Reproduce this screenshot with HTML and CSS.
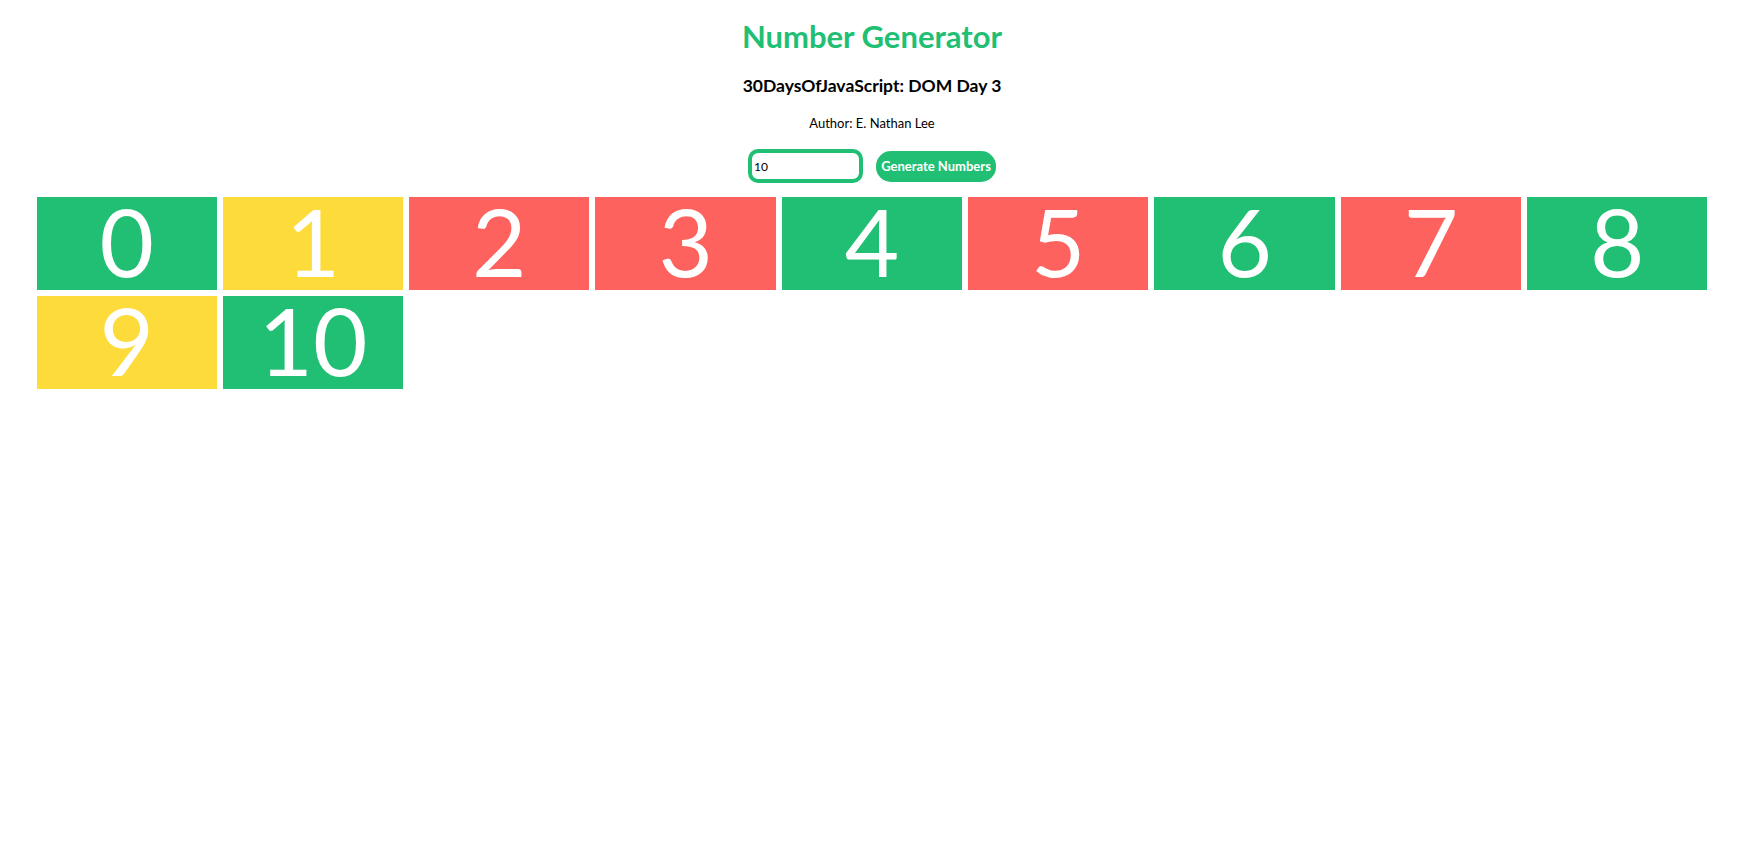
FILE: index.html
```html
<!DOCTYPE html>
<html>
<head>
<meta charset="utf-8">
<title>Number Generator</title>
<link rel="stylesheet" href="styles.css">
</head>
<body>
<header class="header">
  <h1 class="title">Number Generator</h1>
  <h2 class="subtitle">30DaysOfJavaScript: DOM Day 3</h2>
  <p class="author">Author: E. Nathan Lee</p>
</header>
<div class="controls">
  <input class="num-input" type="text" value="10">
  <button class="gen-btn">Generate Numbers</button>
</div>
<div class="grid">
  <div class="box green">0</div>
  <div class="box yellow">1</div>
  <div class="box red">2</div>
  <div class="box red">3</div>
  <div class="box green">4</div>
  <div class="box red">5</div>
  <div class="box green">6</div>
  <div class="box red">7</div>
  <div class="box green">8</div>
  <div class="box yellow">9</div>
  <div class="box green">10</div>
</div>
</body>
</html>
```
FILE: styles.css
```css
* { box-sizing: border-box; }
body {
  margin: 0;
  background: #fff;
  font-family: "Lato", "Open Sans", sans-serif;
  color: #000;
}
.header { text-align: center; }
.title {
  margin: 0;
  padding-top: 18px;
  font-size: 31px;
  line-height: 36px;
  font-weight: 700;
  color: #21bf73;
}
.subtitle {
  margin: 20px 0 0;
  font-size: 17.5px;
  line-height: 24px;
  font-weight: 700;
}
.author {
  margin: 16px 0 0;
  font-size: 13px;
  line-height: 18px;
}
.controls {
  display: flex;
  justify-content: center;
  align-items: center;
  gap: 13px;
  margin-top: 17px;
}
.num-input {
  width: 115px;
  height: 34px;
  border: 4px solid #21bf73;
  border-radius: 10px;
  padding: 0 2px;
  font-family: "Lato", sans-serif;
  font-size: 12px;
  outline: none;
}
.gen-btn {
  width: 120px;
  height: 31px;
  border: none;
  border-radius: 15px;
  background: #21bf73;
  color: #fff;
  font-family: "Lato", sans-serif;
  font-weight: 700;
  font-size: 13px;
  padding: 0;
}
.grid {
  display: grid;
  grid-template-columns: repeat(9, 1fr);
  gap: 6px;
  width: 1671px;
  margin: 14px auto 0;
}
.box {
  height: 93px;
  display: flex;
  align-items: center;
  justify-content: center;
  padding-bottom: 5px;
  color: #fff;
  font-size: 94px;
  line-height: 88px;
}
.green { background: #21bf73; }
.yellow { background: #fddb3a; }
.red { background: #fd625e; }
```
